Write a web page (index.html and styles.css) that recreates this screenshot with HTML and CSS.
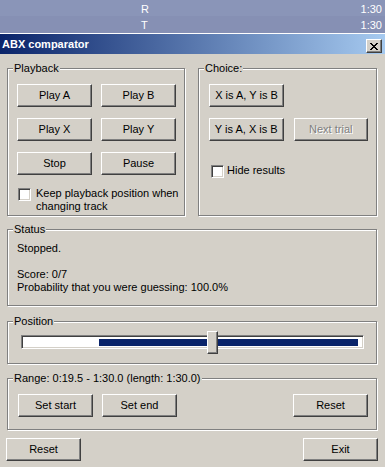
FILE: index.html
```html
<!DOCTYPE html>
<html lang="en">
<head>
  <meta charset="UTF-8" />
  <title>ABX comparator</title>
  <link rel="stylesheet" href="styles.css">
</head>
<body>
  <div class="playlist">
    <div class="track"><span class="track-name">R</span><span class="track-time">1:30</span></div>
    <div class="track alt"><span class="track-name">T</span><span class="track-time">1:30</span></div>
  </div>

  <div class="dialog">
    <div class="titlebar">
      <span class="title">ABX comparator</span>
      <button class="close-btn" aria-label="Close">
        <svg width="8" height="7" viewBox="0 0 8 7" shape-rendering="crispEdges">
          <path fill="#000" d="M0 0h2v1H0zM6 0h2v1H6zM1 1h2v1H1zM5 1h2v1H5zM2 2h4v1H2zM3 3h2v1H3zM2 4h4v1H2zM1 5h2v1H1zM5 5h2v1H5zM0 6h2v1H0zM6 6h2v1H6z"/>
        </svg>
      </button>
    </div>

    <div class="dialog-body">
      <div class="top-row">
        <fieldset class="group playback">
          <legend>Playback</legend>
          <div class="group-body">
            <div class="btn-grid">
              <button class="btn">Play A</button>
              <button class="btn">Play B</button>
              <button class="btn">Play X</button>
              <button class="btn">Play Y</button>
              <button class="btn">Stop</button>
              <button class="btn">Pause</button>
            </div>
            <label class="check keep">
              <span class="box"></span>
              <span class="check-text">Keep playback position when<br>changing track</span>
            </label>
          </div>
        </fieldset>

        <fieldset class="group choice">
          <legend>Choice:</legend>
          <div class="group-body">
            <div class="btn-row">
              <button class="btn">X is A, Y is B</button>
            </div>
            <div class="btn-row">
              <button class="btn">Y is A, X is B</button>
              <button class="btn" disabled>Next trial</button>
            </div>
            <label class="check hide">
              <span class="box"></span>
              <span class="check-text">Hide results</span>
            </label>
          </div>
        </fieldset>
      </div>

      <fieldset class="group status">
        <legend>Status</legend>
        <div class="group-body">
          <div>Stopped.</div>
          <div>&nbsp;</div>
          <div>Score: 0/7</div>
          <div>Probability that you were guessing: 100.0%</div>
        </div>
      </fieldset>

      <fieldset class="group position">
        <legend>Position</legend>
        <div class="group-body">
          <div class="slider">
            <div class="slider-track">
              <div class="slider-range" style="margin-left: 21.7%"></div>
            </div>
            <div class="slider-thumb" style="left: 54.2%"></div>
          </div>
        </div>
      </fieldset>

      <fieldset class="group range">
        <legend>Range: 0:19.5 - 1:30.0 (length: 1:30.0)</legend>
        <div class="group-body">
          <button class="btn">Set start</button>
          <button class="btn">Set end</button>
          <span class="spacer"></span>
          <button class="btn">Reset</button>
        </div>
      </fieldset>

      <div class="footer">
        <button class="btn">Reset</button>
        <button class="btn">Exit</button>
      </div>
    </div>
  </div>
</body>
</html>
```

FILE: styles.css
```css
* {
  box-sizing: border-box;
}
body {
  margin: 0;
  background: #d4d0c8;
  font-family: "Liberation Sans", Arial, sans-serif;
  font-size: 11px;
  line-height: 13px;
  color: #000;
}

/* playlist strip behind the dialog */
.playlist {
  color: #fff;
  border-bottom: 1px solid #fff;
}
.track {
  display: flex;
  height: 16px;
  padding: 3px 3px 0 141px;
  background: #8a95b8;
}
.track.alt {
  height: 17px;
  background: #8690b4;
}
.track-name {
  flex: 1;
}

/* dialog window */
.dialog {
  border-bottom: 1px solid #808080;
}
.titlebar {
  display: flex;
  align-items: center;
  height: 20px;
  padding: 0 3px 0 2px;
  background: linear-gradient(to right, #0a246a, #a6caf0);
}
.title {
  flex: 1;
  color: #fff;
  font-weight: bold;
}
.close-btn {
  display: flex;
  align-items: center;
  justify-content: center;
  align-self: flex-start;
  width: 16px;
  height: 14px;
  margin-top: 5px;
  padding: 0;
  background: #d4d0c8;
  border: 1px solid;
  border-color: #fff #404040 #404040 #fff;
  box-shadow: inset -1px -1px 0 #808080;
}

.dialog-body {
  padding: 8px 8px 6px 7px;
}

/* classic buttons */
.btn {
  width: 75px;
  height: 23px;
  padding: 0;
  font: inherit;
  color: #000;
  background: #d4d0c8;
  border: 1px solid;
  border-color: #fff #404040 #404040 #fff;
  box-shadow: inset -1px -1px 0 #808080;
}
.btn:disabled {
  color: #808080;
  text-shadow: 1px 1px 0 #fff;
}

/* etched group boxes */
.group {
  margin: 0;
  padding: 0;
  min-width: 0;
  border: 1px solid #808080;
  box-shadow: inset 1px 1px 0 #fff, 1px 1px 0 #fff;
}
.group legend {
  margin-left: 5px;
  padding: 0 1px;
  background: #d4d0c8;
}

.top-row {
  display: flex;
  gap: 13px;
}
.playback {
  width: 178px;
}
.choice {
  flex: 1;
}
.playback .group-body {
  padding: 9px 8px 2px 9px;
}
.btn-grid {
  display: grid;
  grid-template-columns: 75px 75px;
  column-gap: 9px;
  row-gap: 11px;
}
.choice .group-body {
  padding: 9px 8px 0 10px;
}
.btn-row {
  display: flex;
  gap: 10px;
  margin-bottom: 11px;
}

/* checkboxes */
.check {
  display: flex;
  align-items: flex-start;
  gap: 5px;
}
.check-text {
  white-space: nowrap;
}
.box {
  flex: none;
  width: 13px;
  height: 13px;
  margin: 1px 0 0 1px;
  background: #fff;
  border: 1px solid;
  border-color: #808080 #fff #fff #808080;
  box-shadow: inset 1px 1px 0 #404040, inset -1px -1px 0 #d4d0c8;
}
.check.keep {
  margin-top: 12px;
}
.check.hide {
  margin-top: 23px;
  gap: 3px;
}
.check.hide .box {
  margin-left: 2px;
}

.status {
  margin-top: 7px;
}
.status .group-body {
  padding: 6px 8px 11px 9px;
}

.position {
  margin-top: 9px;
}
.position .group-body {
  padding: 3px 12px 9px 13px;
}
.slider {
  position: relative;
  height: 23px;
  padding-top: 4px;
}
.slider-track {
  display: flex;
  height: 14px;
  padding: 3px 5px 2px 5px;
  background: #fff;
  border: 1px solid;
  border-color: #808080 #fff #fff #808080;
  box-shadow: inset 1px 1px 0 #404040, inset -1px -1px 0 #d4d0c8;
}
.slider-range {
  flex: 1;
  background: #0a246a;
}
.slider-thumb {
  position: absolute;
  top: 0;
  width: 11px;
  height: 23px;
  background: #d4d0c8;
  border: 1px solid;
  border-color: #fff #404040 #404040 #fff;
  box-shadow: inset -1px -1px 0 #808080;
}

.range {
  margin-top: 8px;
}
.range .group-body {
  display: flex;
  gap: 9px;
  padding: 9px 8px 12px 10px;
}
.spacer {
  flex: 1;
}

.footer {
  display: flex;
  justify-content: space-between;
  margin: 8px -1px 0 -1px;
}
```
